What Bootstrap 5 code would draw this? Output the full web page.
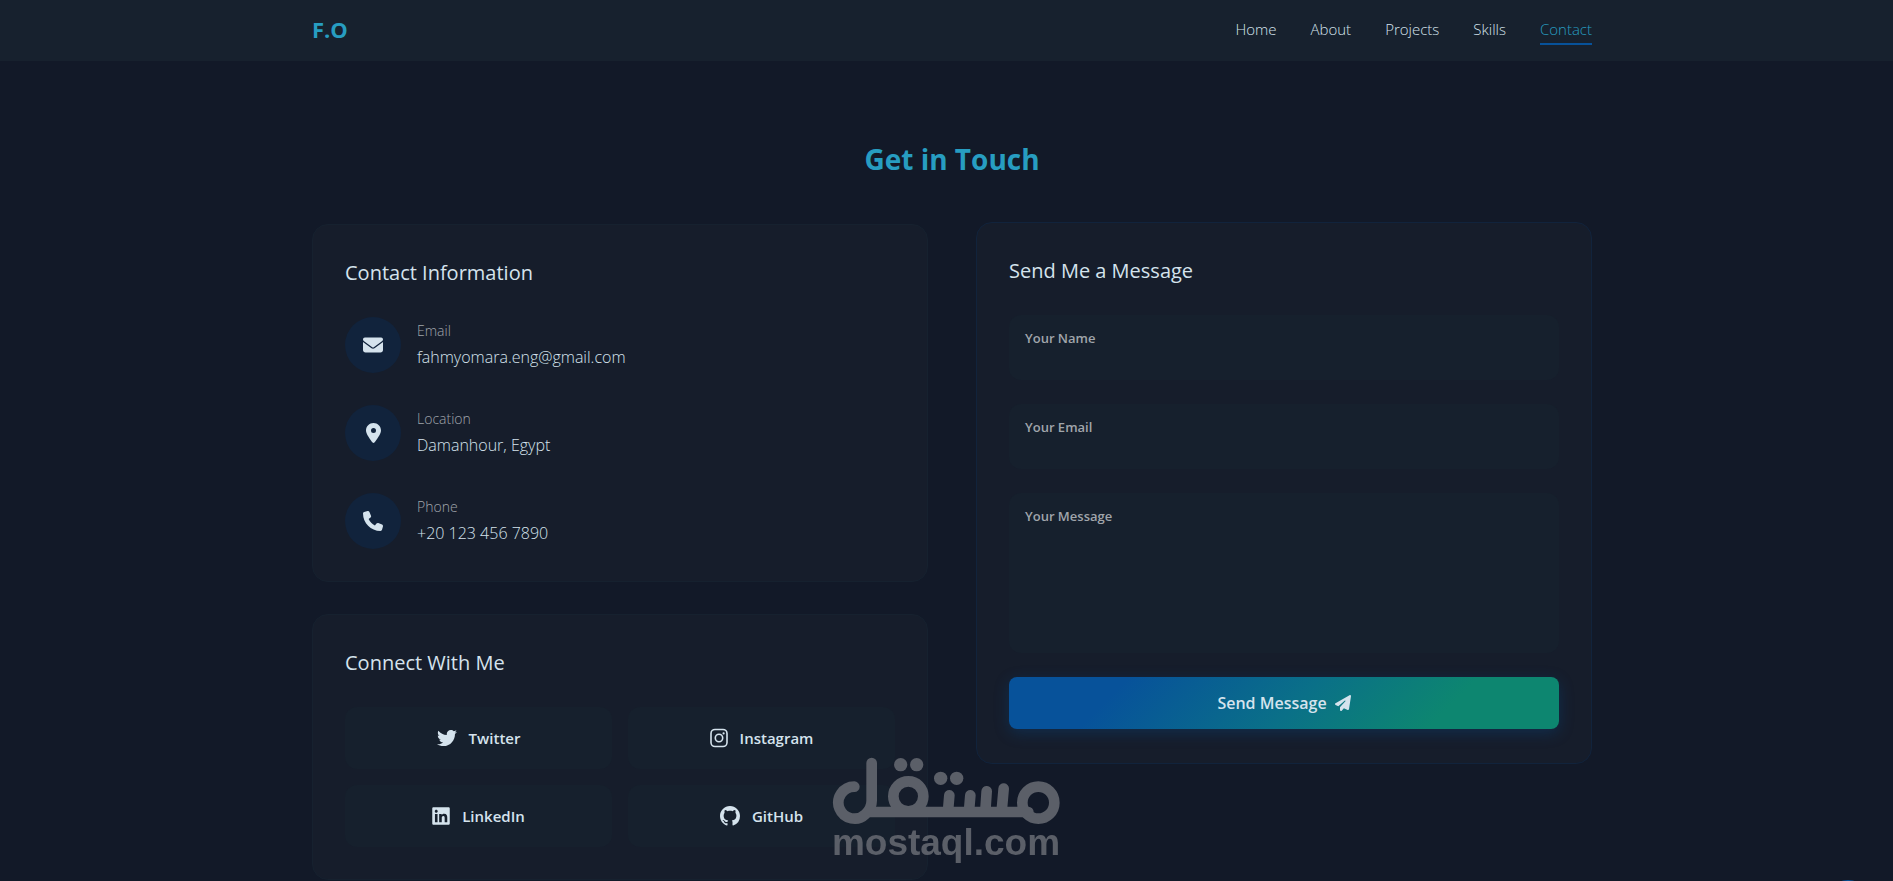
<!DOCTYPE html>
<html lang="en">
<head>
<meta charset="utf-8">
<meta name="viewport" content="width=device-width, initial-scale=1">
<title>F.O | Contact</title>
<link href="https://cdn.jsdelivr.net/npm/bootstrap@5.3.0/dist/css/bootstrap.min.css" rel="stylesheet">
<style>
  :root {
    --ink: #d5e3ed;
    --accent: #279dc1;
    --blue: #07529a;
    --panel: #161d2b;
    --field: #16202d;
    --edge: #16212f;
  }
  body {
    background: #121928;
    color: var(--ink);
    font-family: "Open Sans", "Noto Sans", sans-serif;
    font-weight: 300;
    line-height: 24px;
  }
  .page-shell { padding-left: 11px; }
  .page-width { max-width: 1280px; margin: 0 auto; }
  .site-nav { background: #17212e; height: 61px; }
  .brand { color: var(--accent); font-size: 22px; font-weight: 700; text-decoration: none; padding-bottom: 3px; }
  .site-links { gap: 34px; }
  .site-links a { color: var(--ink); font-size: 15px; text-decoration: none; display: block; padding-bottom: 2px; border-bottom: 2px solid transparent; }
  .site-links a.current { color: var(--accent); border-color: var(--blue); }
  h1 { color: var(--accent); font-size: 28px; font-weight: 700; line-height: 36px; margin: 80px 0 45px; }
  h2 { font-size: 20px; font-weight: 400; line-height: 32px; margin: 0 0 28px; }
  .panel { background: var(--panel); border: 1px solid var(--edge); border-radius: 16px; padding: 32px; }
  .panel-form { border-color: #11233c; padding-bottom: 34px; }
  .stack-wide { gap: 32px; }
  .left-stack { padding-top: 2px; }
  .disc { width: 56px; height: 56px; background: #11233c; }
  svg { fill: currentColor; display: block; flex: none; }
  .hint { font-size: 14px; line-height: 20px; color: #a0a5ab; margin-bottom: 4px; }
  .contact-value { color: var(--ink); text-decoration: none; }
  .social-grid { display: grid; grid-template-columns: 1fr 1fr; gap: 16px; }
  .social { height: 62px; gap: 12px; background: var(--field); border-radius: 12px; color: var(--ink); font-size: 15px; text-decoration: none; font-weight: 600; }
  .field { background: var(--field); border-radius: 12px; padding: 13px 16px 9px; margin-bottom: 24px; }
  .field label { display: block; font-size: 13px; line-height: 20px; font-weight: 600; color: #a0a5ab; }
  .field input, .field textarea { display: block; width: 100%; background: transparent; border: 0; outline: 0; padding: 0; color: var(--ink); resize: none; }
  .field input { height: 23px; }
  .field textarea { height: 118px; }
  .send { width: 100%; height: 52px; border: 0; border-radius: 8px; color: var(--ink); font-weight: 600; background: linear-gradient(135deg, var(--blue) 20%, #0a7088 52%, #0d8670 78%); box-shadow: 0 4px 15px rgba(7, 82, 154, .3); }
  .watermark { position: fixed; left: 50%; bottom: 21px; width: 229px; margin-left: -115px; color: #5b5f68; pointer-events: none; }
  .watermark-name { font-family: "Liberation Sans", sans-serif; font-weight: 700; font-size: 37px; line-height: 34px; text-align: center; white-space: nowrap; }
  .to-top { position: fixed; right: 21px; bottom: -47px; width: 48px; height: 48px; border: 0; background: var(--blue); }
</style>
</head>
<body>
<header class="site-nav page-shell">
  <nav class="page-width h-100 d-flex align-items-center justify-content-between">
    <a class="brand" href="#home">F.O</a>
    <ul class="site-links list-unstyled d-flex mb-0">
      <li><a href="#home">Home</a></li>
      <li><a href="#about">About</a></li>
      <li><a href="#projects">Projects</a></li>
      <li><a href="#skills">Skills</a></li>
      <li><a class="current" href="#contact">Contact</a></li>
    </ul>
  </nav>
</header>

<main class="page-shell" id="contact">
  <div class="page-width">
    <h1 class="text-center">Get in Touch</h1>
    <div class="row gx-5">
      <div class="col-lg-6">
        <div class="left-stack stack-wide d-flex flex-column">
          <section class="panel">
            <h2>Contact Information</h2>
            <div class="d-flex flex-column stack-wide">
              <div class="d-flex align-items-center gap-3">
                <span class="disc rounded-circle d-flex align-items-center justify-content-center"><svg width="20" height="20" viewBox="0 0 512 512"><path d="M48 64C21.500 64 0 85.500 0 112c0 15.100 7.100 29.300 19.200 38.400L236.800 313.600c11.400 8.500 27 8.500 38.400 0L492.800 150.400c12.100-9.100 19.200-23.300 19.200-38.400c0-26.500-21.500-48-48-48H48zM0 176V384c0 35.300 28.700 64 64 64H448c35.300 0 64-28.700 64-64V176L294.400 339.200c-22.800 17.100-54 17.100-76.800 0L0 176z"/></svg></span>
                <div><div class="hint">Email</div><a class="contact-value d-block" href="mailto:fahmyomara.eng@gmail.com">fahmyomara.eng@gmail.com</a></div>
              </div>
              <div class="d-flex align-items-center gap-3">
                <span class="disc rounded-circle d-flex align-items-center justify-content-center"><svg width="15" height="20" viewBox="0 0 384 512"><path d="M215.700 499.200C267 435 384 279.400 384 192C384 86 298 0 192 0S0 86 0 192c0 87.400 117 243 168.300 307.200c12.300 15.300 35.100 15.300 47.400 0zM192 128a64 64 0 1 1 0 128 64 64 0 1 1 0-128z"/></svg></span>
                <div><div class="hint">Location</div><div>Damanhour, Egypt</div></div>
              </div>
              <div class="d-flex align-items-center gap-3">
                <span class="disc rounded-circle d-flex align-items-center justify-content-center"><svg width="20" height="20" viewBox="0 0 512 512"><path d="M164.900 24.600c-7.700-18.600-28-28.500-47.400-23.200l-88 24C12.100 30.200 0 46 0 64C0 311.400 200.600 512 448 512c18 0 33.800-12.100 38.600-29.500l24-88c5.300-19.400-4.600-39.700-23.200-47.400l-96-40c-16.300-6.800-35.200-2.100-46.300 11.600L304.700 368C234.300 334.700 177.300 277.700 144 207.300L193.300 167c13.700-11.200 18.400-30 11.600-46.300l-40-96z"/></svg></span>
                <div><div class="hint">Phone</div><a class="contact-value d-block" href="tel:+201234567890">+20 123 456 7890</a></div>
              </div>
            </div>
          </section>

          <section class="panel">
            <h2>Connect With Me</h2>
            <div class="social-grid">
              <a class="social d-flex align-items-center justify-content-center" href="#twitter"><svg width="20" height="20" viewBox="0 0 512 512"><path d="M459.370 151.716c.325 4.548.325 9.097.325 13.645 0 138.720-105.583 298.558-298.558 298.558-59.452 0-114.680-17.219-161.137-47.106 8.447.974 16.568 1.299 25.340 1.299 49.055 0 94.213-16.568 130.274-44.832-46.132-.975-84.792-31.188-98.112-72.772 6.498.974 12.995 1.624 19.818 1.624 9.421 0 18.843-1.300 27.614-3.573-48.081-9.747-84.143-51.980-84.143-102.985v-1.299c13.969 7.797 30.214 12.670 47.431 13.319-28.264-18.843-46.781-51.005-46.781-87.391 0-19.492 5.197-37.360 14.294-52.954 51.655 63.675 129.300 105.258 216.365 109.807-1.624-7.797-2.599-15.918-2.599-24.040 0-57.828 46.782-104.934 104.934-104.934 30.213 0 57.502 12.670 76.670 33.137 23.715-4.548 46.456-13.320 66.599-25.340-7.798 24.366-24.366 44.833-46.132 57.827 21.117-2.273 41.584-8.122 60.426-16.243-14.292 20.791-32.161 39.308-52.628 54.253z"/></svg><span>Twitter</span></a>
              <a class="social d-flex align-items-center justify-content-center" href="#instagram"><svg width="18" height="20" viewBox="0 0 18 20"><g fill="none" stroke="currentColor" stroke-width="1.600"><rect x="1" y="1.500" width="16" height="17" rx="4"/><circle cx="9" cy="10" r="3.700"/></g><circle cx="13.600" cy="5.400" r="1.100"/></svg><span>Instagram</span></a>
              <a class="social d-flex align-items-center justify-content-center" href="#linkedin"><svg width="18" height="20" viewBox="0 0 448 512"><path d="M416 32H31.900C14.300 32 0 46.500 0 64.300v383.400C0 465.500 14.300 480 31.900 480H416c17.600 0 32-14.500 32-32.300V64.300c0-17.800-14.400-32.300-32-32.300zM135.400 416H69V202.200h66.500V416zm-33.200-243c-21.300 0-38.500-17.300-38.500-38.500S80.900 96 102.200 96c21.200 0 38.500 17.300 38.500 38.500 0 21.300-17.200 38.500-38.500 38.500zm282.100 243h-66.400V312c0-24.800-.5-56.700-34.500-56.700-34.600 0-39.900 27-39.900 54.900V416h-66.400V202.200h63.700v29.200h.9c8.900-16.800 30.600-34.500 62.900-34.500 67.200 0 79.700 44.300 79.700 101.900V416z"/></svg><span>LinkedIn</span></a>
              <a class="social d-flex align-items-center justify-content-center" href="#github"><svg width="20" height="20" viewBox="0 0 16 16"><path d="M8 0C3.580 0 0 3.580 0 8c0 3.540 2.290 6.530 5.470 7.590.4.070.55-.17.55-.38 0-.19-.01-.82-.01-1.490-2.010.37-2.530-.49-2.690-.94-.09-.23-.48-.94-.82-1.130-.28-.15-.68-.52-.01-.53.63-.01 1.080.58 1.230.82.72 1.210 1.870.87 2.330.66.07-.52.28-.87.51-1.070-1.780-.2-3.640-.89-3.640-3.950 0-.87.31-1.590.82-2.150-.08-.2-.36-1.020.08-2.120 0 0 .67-.21 2.200.82.64-.18 1.320-.27 2-.27s1.360.09 2 .27c1.530-1.040 2.200-.82 2.200-.82.44 1.100.16 1.920.08 2.120.51.56.82 1.270.82 2.150 0 3.070-1.870 3.750-3.650 3.950.29.25.54.73.54 1.480 0 1.070-.01 1.930-.01 2.200 0 .21.15.46.55.38A8.010 8.010 0 0 0 16 8c0-4.420-3.580-8-8-8"/></svg><span>GitHub</span></a>
            </div>
          </section>
        </div>
      </div>

      <div class="col-lg-6">
        <section class="panel panel-form">
          <h2>Send Me a Message</h2>
          <form>
            <div class="field"><label for="name">Your Name</label><input id="name" type="text"></div>
            <div class="field"><label for="email">Your Email</label><input id="email" type="email"></div>
            <div class="field"><label for="message">Your Message</label><textarea id="message"></textarea></div>
            <button class="send d-flex align-items-center justify-content-center gap-2" type="button"><span>Send Message</span><svg width="16" height="16" viewBox="0 0 512 512"><path d="M498.100 5.600c10.100 7 15.400 19.100 13.500 31.200l-64 416c-1.500 9.700-7.400 18.200-16 23s-18.900 5.400-28 1.600L284 427.700l-68.500 74.100c-8.900 9.700-22.900 12.900-35.200 8.100S160 493.200 160 480V396.400c0-4 1.500-7.800 4.200-10.700L331.800 202.800c5.800-6.300 5.600-16-.4-22s-15.700-6.400-22-.7L106 360.800 17.700 316.600C7.100 311.300 .3 300.700 0 288.900s5.900-22.800 16.100-28.700l448-256c10.700-6.100 23.900-5.500 34 1.400z"/></svg></button>
          </form>
        </section>
      </div>
    </div>
  </div>
</main>

<div class="watermark">
  <svg width="229" height="70" viewBox="36 50 687 210" role="img" aria-label="مستقل">
    <g fill="none" stroke="currentColor" stroke-width="32" stroke-linecap="round">
      <circle cx="655" cy="190" r="48"/>
      <circle cx="265" cy="171" r="45"/>
      <path d="M103 142a48 48 0 1 0 34 82q18-18 18-40V71M145 218H625M388 168l-4 48M451 168l-4 48M500 156l-4 60M551 148l-6 68"/>
    </g>
    <circle cx="242" cy="76" r="20"/><circle cx="290" cy="76" r="20"/><circle cx="362" cy="117" r="20"/><circle cx="410" cy="117" r="20"/>
  </svg>
  <div class="watermark-name">mostaql.com</div>
</div>
<button class="to-top rounded-circle" type="button" aria-label="Back to top"></button>

<script src="https://cdn.jsdelivr.net/npm/bootstrap@5.3.0/dist/js/bootstrap.bundle.min.js"></script>
</body>
</html>
